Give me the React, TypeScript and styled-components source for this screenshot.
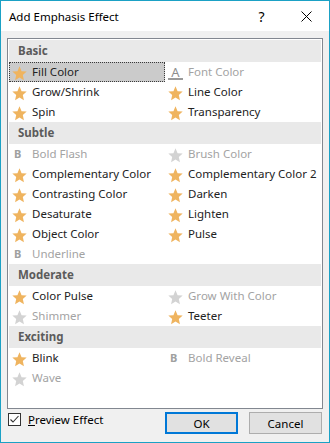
import styled, { createGlobalStyle } from "styled-components"

const GlobalStyle = createGlobalStyle`
  html, body {
    margin: 0;
    padding: 0;
    background: #ffffff;
  }
`

type IconKind = "star" | "bold" | "font"

interface Effect {
    name: string;
    icon: IconKind;
    disabled?: boolean;
    selected?: boolean;
}

interface Section {
    title: string;
    items: Effect[];
}

const sections: Section[] = [
    {
        title: "Basic",
        items: [
            { name: "Fill Color", icon: "star", selected: true },
            { name: "Font Color", icon: "font", disabled: true },
            { name: "Grow/Shrink", icon: "star" },
            { name: "Line Color", icon: "star" },
            { name: "Spin", icon: "star" },
            { name: "Transparency", icon: "star" },
        ]
    },
    {
        title: "Subtle",
        items: [
            { name: "Bold Flash", icon: "bold", disabled: true },
            { name: "Brush Color", icon: "star", disabled: true },
            { name: "Complementary Color", icon: "star" },
            { name: "Complementary Color 2", icon: "star" },
            { name: "Contrasting Color", icon: "star" },
            { name: "Darken", icon: "star" },
            { name: "Desaturate", icon: "star" },
            { name: "Lighten", icon: "star" },
            { name: "Object Color", icon: "star" },
            { name: "Pulse", icon: "star" },
            { name: "Underline", icon: "bold", disabled: true },
        ]
    },
    {
        title: "Moderate",
        items: [
            { name: "Color Pulse", icon: "star" },
            { name: "Grow With Color", icon: "star", disabled: true },
            { name: "Shimmer", icon: "star", disabled: true },
            { name: "Teeter", icon: "star" },
        ]
    },
    {
        title: "Exciting",
        items: [
            { name: "Blink", icon: "star" },
            { name: "Bold Reveal", icon: "bold", disabled: true },
            { name: "Wave", icon: "star", disabled: true },
        ]
    },
]

const Window = styled.div`
    width: 330px;
    height: 443px;
    box-sizing: border-box;
    border: 1px solid #1ba1c5;
    background: #f0f0f0;
    display: flex;
    flex-direction: column;
    font-family: "Noto Sans", "Open Sans", sans-serif;
    font-size: 11.5px;
    color: #000;
`

const TitleBar = styled.div`
    height: 30px;
    background: #fff;
    display: flex;
    align-items: center;
    padding-left: 8px;
`

const Title = styled.div`
    flex: 1;
    font-size: 11.5px;
    color: #000;
`

const CaptionButton = styled.div`
    width: 45px;
    height: 30px;
    display: flex;
    align-items: center;
    justify-content: center;
    font-size: 14px;
    color: #000;
`

const Body = styled.div`
    flex: 1;
    padding: 7px 6px 0 6px;
    display: flex;
    flex-direction: column;
`

const ListBox = styled.div`
    height: 371px;
    box-sizing: border-box;
    border: 1px solid #828790;
    background: #fff;
    padding: 1px;
    overflow: hidden;
`

const SectionHeader = styled.div`
    height: 22px;
    line-height: 22px;
    background: #e9e9e9;
    padding-left: 9px;
    font-weight: bold;
    color: #5b5b5b;
`

const Grid = styled.div`
    display: grid;
    grid-template-columns: 156px 156px;
    grid-auto-rows: 20px;
`

const Item = styled.div<{ $selected?: boolean; $disabled?: boolean }>`
    display: flex;
    box-sizing: border-box;
    height: 20px;
    line-height: 18px;
    border: 1px dotted ${p => p.$selected ? "#3a3a3a" : "transparent"};
    background: ${p => p.$selected ? "#cbcbcb" : "transparent"};
    color: ${p => p.$disabled ? "#a3a3a3" : "#222"};
    white-space: nowrap;
`

const IconSlot = styled.div`
    width: 22px;
    flex: none;
    padding-left: 2px;
    box-sizing: border-box;
    display: flex;
    align-items: center;
`

const BoldGlyph = styled.span`
    font-weight: bold;
    font-size: 11px;
    color: #a0a0a0;
    padding-left: 2px;
`

const FontGlyph = styled.span`
    display: inline-block;
    width: 15px;
    font-size: 13px;
    line-height: 12px;
    text-align: center;
    color: #8e8e8e;
    border-bottom: 2px solid #9a9a9a;
    margin-top: 1px;
`

const Footer = styled.div`
    display: flex;
    align-items: flex-start;
    margin-top: 3px;
    height: 22px;
    padding-left: 1px;
`

const CheckLabel = styled.label`
    display: flex;
    align-items: center;
    gap: 7px;
    margin-top: 1px;
    line-height: 13px;
    color: #000;
`

const CheckBox = styled.span`
    width: 13px;
    height: 13px;
    box-sizing: border-box;
    border: 1px solid #333;
    background: #fff;
    display: flex;
    align-items: center;
    justify-content: center;
`

const ButtonGroup = styled.div`
    margin-left: auto;
    margin-right: 1px;
    display: flex;
    gap: 11px;
`

const Button = styled.button<{ $default?: boolean }>`
    width: 73px;
    height: 22px;
    box-sizing: border-box;
    padding: 0;
    background: #e1e1e1;
    border: ${p => p.$default ? "2px solid #0078d7" : "1px solid #adadad"};
    font-family: "Noto Sans", "Open Sans", sans-serif;
    font-size: 11.5px;
    color: #000;
`

function Star({ disabled }: { disabled?: boolean }) {
    return (
        <svg width="15" height="15" viewBox="0 0 24 24" style={{ marginTop: 3 }}>
            <polygon
                points="12,0.5 15.3,8.2 23.5,8.9 17.3,14.4 19.1,22.6 12,18.3 4.9,22.6 6.7,14.4 0.5,8.9 8.7,8.2"
                fill={disabled ? "#d3d3d3" : "#efb45f"}
            />
        </svg>
    )
}

function EffectIcon({ effect }: { effect: Effect }) {
    if (effect.icon === "bold") return <BoldGlyph>B</BoldGlyph>
    if (effect.icon === "font") return <FontGlyph>A</FontGlyph>
    return <Star disabled={effect.disabled} />
}

export default function App() {
    return (
        <>
            <GlobalStyle />
            <Window>
                <TitleBar>
                    <Title>Add Emphasis Effect</Title>
                    <CaptionButton>?</CaptionButton>
                    <CaptionButton>
                        <svg width="11" height="11" viewBox="0 0 11 11">
                            <path d="M0.5 0.5 L10.5 10.5 M10.5 0.5 L0.5 10.5" stroke="#000" strokeWidth="1" />
                        </svg>
                    </CaptionButton>
                </TitleBar>
                <Body>
                    <ListBox>
                        {sections.map(section => (
                            <div key={section.title}>
                                <SectionHeader>{section.title}</SectionHeader>
                                <Grid>
                                    {section.items.map(effect => (
                                        <Item
                                            key={effect.name}
                                            $selected={effect.selected}
                                            $disabled={effect.disabled}
                                        >
                                            <IconSlot>
                                                <EffectIcon effect={effect} />
                                            </IconSlot>
                                            {effect.name}
                                        </Item>
                                    ))}
                                </Grid>
                            </div>
                        ))}
                    </ListBox>
                    <Footer>
                        <CheckLabel>
                            <CheckBox>
                                <svg width="11" height="11" viewBox="0 0 11 11">
                                    <polyline points="1.5,5.5 4,8 9.5,2" fill="none" stroke="#333" strokeWidth="1.1" />
                                </svg>
                            </CheckBox>
                            <span><u>P</u>review Effect</span>
                        </CheckLabel>
                        <ButtonGroup>
                            <Button $default>OK</Button>
                            <Button>Cancel</Button>
                        </ButtonGroup>
                    </Footer>
                </Body>
            </Window>
        </>
    )
}
